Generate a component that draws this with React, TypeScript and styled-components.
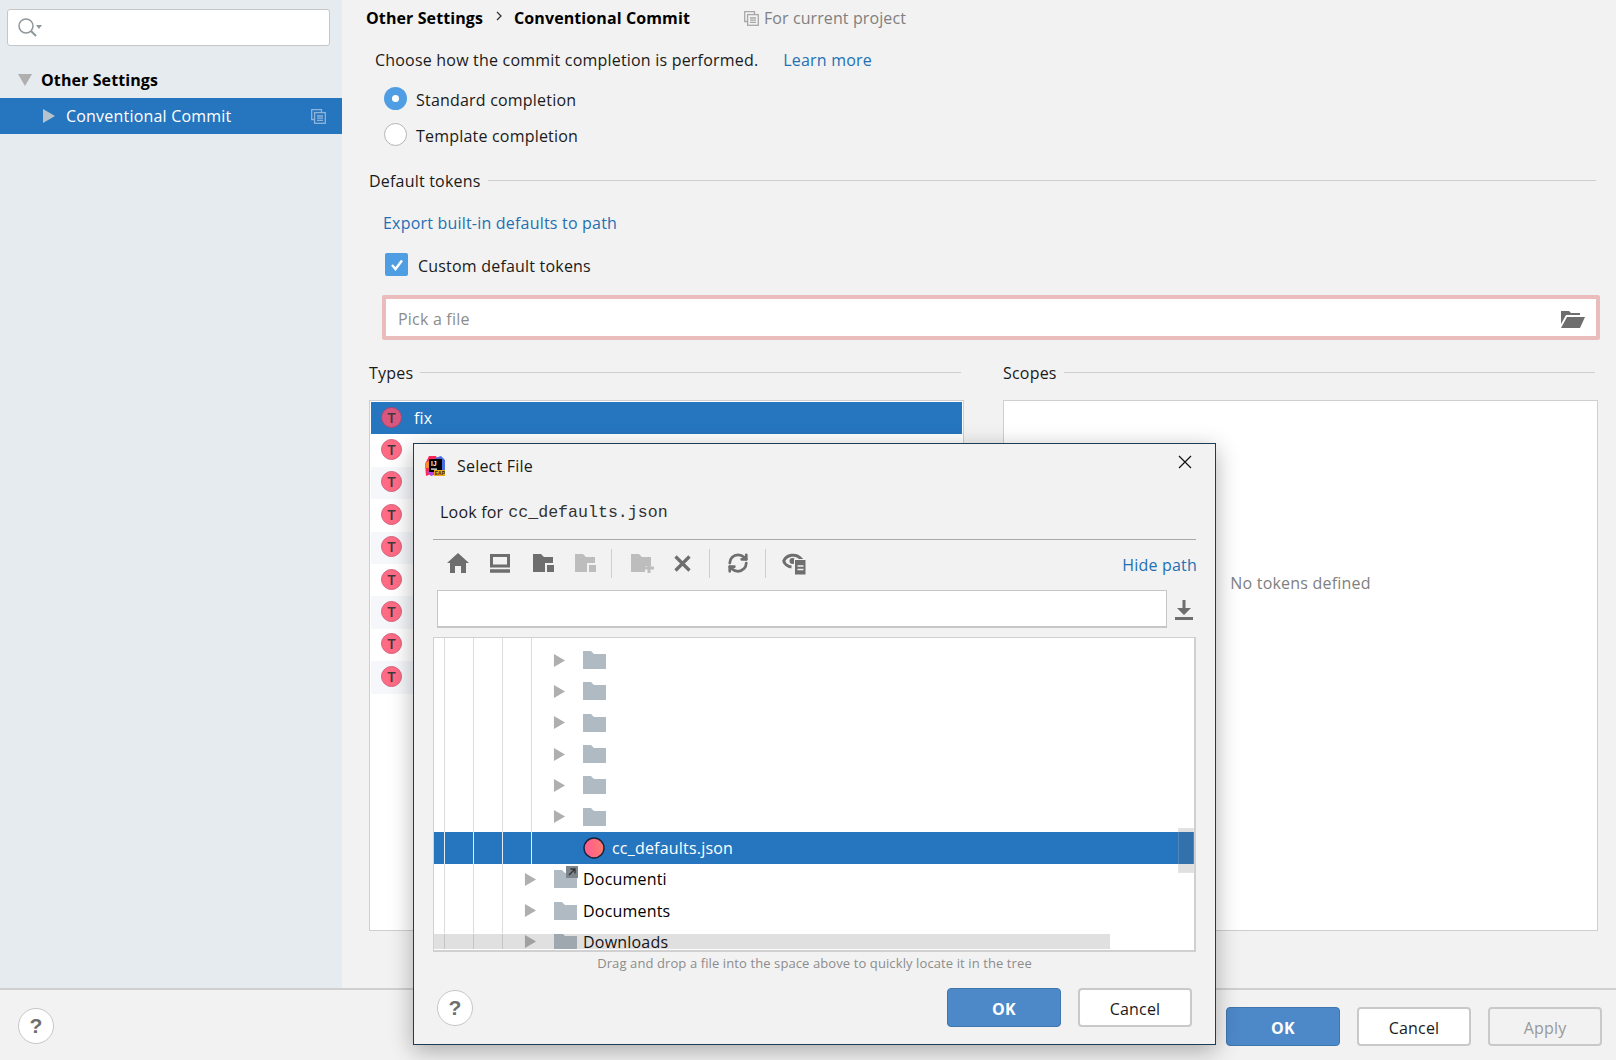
import React from 'react';
import styled, { createGlobalStyle } from 'styled-components';
import { RefreshCw } from 'lucide-react';

const GlobalStyle = createGlobalStyle`
  html, body {
    margin: 0;
    padding: 0;
    background: #f2f2f2;
  }
  body {
    font-family: "Open Sans", "Noto Sans", "Liberation Sans", sans-serif;
    font-size: 16px;
    letter-spacing: 0.2px;
    color: #1a1a1a;
  }
  * { box-sizing: border-box; }
`;

const BLUE = '#2675bf';
const LINK = '#2470b3';

const Page = styled.div`
  position: relative;
  width: 1616px;
  height: 1060px;
  overflow: hidden;
  display: flex;
  flex-direction: column;
`;

const Top = styled.div`
  height: 988px;
  display: flex;
`;

const Sidebar = styled.aside`
  flex: none;
  width: 342px;
  background: #e6ebf0;
  padding-top: 9px;
`;

const SearchBox = styled.div`
  width: 323px;
  height: 37px;
  margin-left: 7px;
  margin-bottom: 16px;
  padding-left: 9px;
  background: #fff;
  border: 1px solid #c6c6c6;
  border-radius: 3px;
  display: flex;
  align-items: center;
`;

const TreeHead = styled.div`
  height: 36px;
  padding-left: 18px;
  display: flex;
  align-items: center;
  gap: 9px;
  font-weight: 700;
  letter-spacing: 0.1px;
  color: #000;
`;

const TreeSelected = styled.div`
  height: 36px;
  padding: 0 16px 0 42px;
  display: flex;
  align-items: center;
  gap: 10px;
  background: ${BLUE};
  color: #fff;
`;

const Grow = styled.span`
  flex: 1;
`;

const Content = styled.main`
  flex: 1;
  min-width: 0;
  padding: 0 17px 0 27px;
`;

const Crumbs = styled.div`
  height: 36px;
  margin-left: -3px;
  display: flex;
  align-items: center;
  font-weight: 700;
  letter-spacing: 0.1px;
  color: #000;
`;

const CrumbArrow = styled.span`
  width: 31px;
  margin-top: -4px;
  display: flex;
  justify-content: center;
`;

const Scope = styled.span`
  margin-left: 54px;
  display: flex;
  align-items: center;
  gap: 5px;
  font-weight: 400;
  color: #808080;
`;

const Intro = styled.div`
  height: 24px;
  margin: 12px 0 15px 6px;
  display: flex;
  align-items: center;
  gap: 25px;
  color: #1a1a1a;
`;

const Link = styled.span`
  color: ${LINK};
`;

const OptionRow = styled.div`
  height: 23px;
  margin: 0 0 13px 15px;
  display: flex;
  align-items: center;
  gap: 9px;
`;

const OptionLabel = styled.span`
  margin-top: 2px;
`;

const Radio = styled.span<{ $on?: boolean }>`
  width: 23px;
  height: 23px;
  border-radius: 50%;
  display: flex;
  align-items: center;
  justify-content: center;
  background: ${p => (p.$on ? '#4f9ee3' : '#fff')};
  border: ${p => (p.$on ? 'none' : '1px solid #b5b5b5')};
  &::after {
    content: '';
    width: 7px;
    height: 7px;
    border-radius: 50%;
    background: ${p => (p.$on ? '#fff' : 'transparent')};
  }
`;

const SectionTitle = styled.div<{ $mt: number }>`
  height: 24px;
  margin-top: ${p => p.$mt}px;
  padding-right: 3px;
  display: flex;
  align-items: center;
  gap: 7px;
  &::after {
    content: '';
    flex: 1;
    height: 1px;
    margin-top: -2px;
    background: #cfcfcf;
  }
`;

const ExportRow = styled.div`
  height: 24px;
  margin: 18px 0 18px 14px;
  display: flex;
  align-items: center;
`;

const CheckRow = styled.div`
  height: 23px;
  margin-left: 16px;
  display: flex;
  align-items: center;
  gap: 10px;
`;

const CheckLabel = styled.span`
  margin-top: 2px;
`;

const CheckBox = styled.span`
  width: 23px;
  height: 23px;
  border-radius: 2px;
  background: #4f9ee3;
  display: flex;
  align-items: center;
  justify-content: center;
`;

const FileField = styled.div`
  height: 45px;
  margin: 19px -1px 21px 13px;
  padding: 2px 11px 0 12px;
  background: #fff;
  border: 4px solid #ebbcbc;
  border-radius: 2px;
  display: flex;
  align-items: center;
  justify-content: space-between;
  color: #8c8c8c;
`;

const Columns = styled.div`
  display: grid;
  grid-template-columns: 595px 595px;
  gap: 39px;
`;

const ListBox = styled.div`
  height: 531px;
  margin-top: 15px;
  padding: 1px;
  background: #fff;
  border: 1px solid #cfcfcf;
`;

const ListRow = styled.div<{ $selected?: boolean; $odd?: boolean }>`
  height: 32.4px;
  padding-left: 10px;
  display: flex;
  align-items: center;
  gap: 12px;
  color: #fff;
  background: ${p => (p.$selected ? BLUE : p.$odd ? '#f5f7fb' : '#fff')};
`;

const Badge = styled.span<{ $selected?: boolean }>`
  width: 21px;
  height: 21px;
  margin-top: -2px;
  border-radius: 50%;
  display: flex;
  align-items: center;
  justify-content: center;
  font-size: 15px;
  font-weight: 600;
  line-height: 1;
  color: #43393d;
  background: ${p => (p.$selected ? '#d9567f' : '#ff6b85')};
  border: 1px solid ${p => (p.$selected ? '#a9466f' : '#d4607a')};
`;

const EmptyBox = styled(ListBox)`
  padding-top: 171px;
  text-align: center;
  color: #808080;
`;

const Footer = styled.footer`
  height: 72px;
  padding: 17px 14px 0 18px;
  border-top: 2px solid #d0d0d0;
  display: flex;
  align-items: flex-start;
  gap: 17px;
`;

const Help = styled.span<{ $mt?: number }>`
  width: 36px;
  height: 36px;
  margin-top: ${p => p.$mt ?? 1}px;
  margin-right: auto;
  border-radius: 50%;
  background: #fff;
  border: 1px solid #c6c6c6;
  display: flex;
  align-items: center;
  justify-content: center;
  font-family: "Liberation Sans", sans-serif;
  font-size: 21px;
  font-weight: 700;
  color: #6e6e6e;
`;

const Button = styled.button<{ $kind?: 'primary' | 'disabled' }>`
  width: 114px;
  height: 39px;
  padding: 3px 0 0;
  border-radius: 4px;
  font: inherit;
  letter-spacing: inherit;
  font-weight: ${p => (p.$kind === 'primary' ? 700 : 400)};
  color: ${p => (p.$kind === 'primary' ? '#fff' : p.$kind === 'disabled' ? '#999' : '#1a1a1a')};
  background: ${p => (p.$kind === 'primary' ? '#4d88c9' : p.$kind === 'disabled' ? '#f2f2f2' : '#fff')};
  border: ${p => (p.$kind === 'primary' ? '1px solid #3f76ad' : '2px solid #c9c9c9')};
`;

/* floating file chooser */
const Dialog = styled.section`
  position: absolute;
  left: 413px;
  top: 443px;
  width: 803px;
  height: 602px;
  background: #f2f2f2;
  border: 1px solid #1c3d5a;
  box-shadow: 0 6px 22px rgba(0, 0, 0, 0.3);
`;

const TitleBar = styled.div`
  height: 44px;
  padding: 0 23px 0 11px;
  display: flex;
  align-items: center;
  gap: 12px;
`;

const Close = styled.span`
  margin: -8px 0 0 auto;
  display: flex;
`;

const LookFor = styled.div`
  height: 24px;
  margin: 12px 0 15px 26px;
  display: flex;
  align-items: center;
  gap: 5px;
`;

const Mono = styled.span`
  font-family: "Liberation Mono", monospace;
  font-size: 16.6px;
  letter-spacing: 0;
  color: #333;
`;

const Divider = styled.div`
  height: 1px;
  margin: 0 19px;
  background: #a8a8a8;
`;

const Toolbar = styled.div`
  height: 46px;
  padding: 0 18px 0 23px;
  display: flex;
  align-items: center;
`;

const ToolButton = styled.span<{ $nudge?: boolean }>`
  width: 42px;
  padding-left: ${p => (p.$nudge ? 4 : 0)}px;
  display: flex;
  justify-content: center;
`;

const ToolSep = styled.span`
  width: 1px;
  height: 29px;
  margin: 0 7px 0 6px;
  background: #cfcfcf;
`;

const HidePath = styled(Link)`
  margin: 4px 0 0 auto;
`;

const PathRow = styled.div`
  height: 38px;
  margin: 4px 0 9px 23px;
  display: flex;
  align-items: center;
`;

const PathInput = styled.div`
  width: 730px;
  height: 38px;
  background: #fff;
  border: 1px solid #c6c6c6;
  border-bottom-width: 2px;
`;

const PathAction = styled.span`
  margin: 2px 0 0 7px;
  display: flex;
`;

const Tree = styled.div`
  position: relative;
  height: 315px;
  margin: 0 19px;
  overflow: hidden;
  background: #fff;
  border: 1px solid #d0d0d0;
  border-bottom-width: 2px;
  border-right-width: 2px;
`;

const TreeRow = styled.div<{ $h?: number; $selected?: boolean }>`
  height: ${p => p.$h ?? 31.3}px;
  display: flex;
  align-items: center;
  color: ${p => (p.$selected ? '#fff' : '#000')};
  background: ${p => (p.$selected ? BLUE : 'transparent')};
`;

const Guides = styled.span<{ $selected?: boolean }>`
  align-self: stretch;
  flex: none;
  display: flex;
  margin-left: 10px;
  span {
    width: 29px;
    border-left: 1px solid ${p => (p.$selected ? '#e4eef8' : '#dcdcdc')};
  }
`;

const Expander = styled.span`
  width: 30px;
  margin-left: -7px;
  flex: none;
  display: flex;
  align-items: center;
`;

const RowIcon = styled.span`
  position: relative;
  width: 29px;
  flex: none;
  display: flex;
  align-items: center;
`;

const LinkMark = styled.span`
  position: absolute;
  right: 5px;
  top: -4px;
  display: flex;
`;

const HScroll = styled.div`
  position: absolute;
  left: 0;
  bottom: 0;
  width: 677px;
  height: 17px;
  background: rgba(100, 100, 100, 0.2);
  border: 1px solid #fff;
  border-left: none;
`;

const VScroll = styled.div`
  position: absolute;
  right: 0;
  top: 190px;
  width: 16px;
  height: 45px;
  background: rgba(100, 100, 100, 0.2);
  border: 1px solid rgba(255, 255, 255, 0.15);
`;

const Hint = styled.div`
  height: 22px;
  display: flex;
  align-items: center;
  justify-content: center;
  font-size: 13px;
  letter-spacing: 0.1px;
  color: #8c8c8c;
`;

const DialogFooter = styled.div`
  margin-top: 14px;
  padding: 0 23px;
  display: flex;
  align-items: flex-start;
  gap: 17px;
`;

/* icons */
const SearchIcon = () => (
  <svg width="26" height="22" viewBox="0 0 26 22" fill="none">
    <circle cx="9" cy="9" r="7" stroke="#8e979c" strokeWidth="1.5" />
    <path d="M14 14l5 5" stroke="#8e979c" strokeWidth="2" />
    <path d="M19 8h6l-3 4z" fill="#8e979c" />
  </svg>
);

const Triangle = ({ dir, color = '#afafaf', size = 14 }: { dir: 'right' | 'down'; color?: string; size?: number }) => (
  <svg width={size} height={size} viewBox="0 0 14 14">
    <path d={dir === 'right' ? 'M1 0l12 7-12 7z' : 'M0 1h14l-7 12z'} fill={color} />
  </svg>
);

const CopyIcon = ({ color }: { color: string }) => (
  <svg width="15" height="15" viewBox="0 0 15 15" fill="none" stroke={color} strokeWidth="1.3">
    <path d="M3 10.5H.7V.7h9.8V3" />
    <rect x="3.6" y="3.6" width="10.7" height="10.7" />
    <path d="M6 7h6M6 9.2h6M6 11.4h6" />
  </svg>
);

const OpenFolder = () => (
  <svg width="24" height="19" viewBox="0 0 24 19" fill="#6e6e6e">
    <path d="M0 2h8l2 2h9v2H5L0 15z" />
    <path d="M6 8h18l-5 11H0z" />
  </svg>
);

const FolderDoc = ({ color }: { color: string }) => (
  <svg width="22" height="20" viewBox="0 0 22 20">
    <path d="M0 1h8l3 3h9v15H0z" fill={color} />
    <rect x="12" y="10" width="10" height="10" fill="#f2f2f2" />
    <rect x="14" y="12" width="7" height="7" fill={color} />
  </svg>
);

const Logo = () => (
  <svg width="20" height="20" viewBox="0 0 20 20">
    <path d="M0 8l4-8h7l3 6-8 12-5 2z" fill="#fe2857" />
    <path d="M0 7l4-2v7H1z" fill="#ff8a26" />
    <path d="M10 2l6-2 4 4v10H10z" fill="#4a6ee0" />
    <path d="M2 16l4 4 6-2-4-6z" fill="#b345d8" />
    <rect x="4" y="3" width="13" height="13" fill="#000" />
    <rect x="6" y="12.5" width="6" height="1.2" fill="#fff" />
    <text x="6" y="10" fontSize="6.5" fontWeight="700" fill="#fff" fontFamily="Liberation Sans, sans-serif">IJ</text>
    <rect x="9" y="14" width="11" height="6" fill="#f0a81c" />
    <text x="9.7" y="19" fontSize="4.8" fontWeight="700" fill="#222" fontFamily="Liberation Sans, sans-serif">EAP</text>
  </svg>
);

const ToolIcons: Record<string, React.ReactNode> = {
  home: (
    <svg width="22" height="20" viewBox="0 0 22 20" fill="#6e6e6e">
      <path d="M11 0l11 10h-3v10h-5v-7H8v7H3V10H0z" />
    </svg>
  ),
  monitor: (
    <svg width="20" height="19" viewBox="0 0 20 19" fill="none" stroke="#6e6e6e">
      <rect x="1.5" y="1.5" width="17" height="10.5" strokeWidth="3" />
      <path d="M0 17h20" strokeWidth="3.5" />
    </svg>
  ),
  folderPlus: (
    <svg width="23" height="20" viewBox="0 0 23 20">
      <path d="M0 1h8l3 3h9v9h-6v6H0z" fill="#bdbdbd" />
      <path d="M18 10v10M13 15h10" stroke="#bdbdbd" strokeWidth="3" />
    </svg>
  ),
  close: (
    <svg width="17" height="17" viewBox="0 0 17 17" stroke="#6e6e6e" strokeWidth="3.2">
      <path d="M1.5 1.5l14 14M15.5 1.5l-14 14" />
    </svg>
  ),
  eye: (
    <svg width="24" height="23" viewBox="0 0 24 23" fill="none">
      <path d="M1.5 9.5C4 3 14 0 20 8" stroke="#6e6e6e" strokeWidth="3" />
      <path d="M1.5 9c1.5 3.5 4 5.5 8 6" stroke="#6e6e6e" strokeWidth="3" />
      <circle cx="10.5" cy="9" r="3" fill="#6e6e6e" />
      <rect x="12.5" y="7.5" width="11.5" height="15.5" fill="#6e6e6e" stroke="#f2f2f2" />
      <path d="M15.5 14h6M15.5 17.5h6" stroke="#f2f2f2" strokeWidth="1.5" />
    </svg>
  ),
};

const Download = () => (
  <svg width="20" height="20" viewBox="0 0 20 20" fill="#6e6e6e">
    <path d="M8.5 0h3v8H17l-7 7-7-7h5.5z" />
    <rect x="1" y="17" width="18" height="3" />
  </svg>
);

const Folder = ({ color = '#afbac2' }: { color?: string }) => (
  <svg width="23" height="18" viewBox="0 0 23 18">
    <path d="M0 0h8l3 3h12v15H0z" fill={color} />
  </svg>
);

const ShortcutMark = () => (
  <svg width="12" height="12" viewBox="0 0 12 12" fill="none">
    <rect width="12" height="12" fill="#7c868c" />
    <path d="M3 9l6-6M4.5 3H9v4.5" stroke="#333" strokeWidth="1.3" />
  </svg>
);

const FileDot = () => (
  <svg width="22" height="22" viewBox="0 0 22 22">
    <defs>
      <linearGradient id="fileDot">
        <stop offset="0" stopColor="#ff5a94" />
        <stop offset="1" stopColor="#ff7b6b" />
      </linearGradient>
    </defs>
    <circle cx="11" cy="11" r="10" fill="url(#fileDot)" stroke="#15233a" strokeWidth="1.4" />
  </svg>
);

const GuideLines = ({ depth, selected }: { depth: number; selected?: boolean }) => (
  <Guides $selected={selected}>
    {Array.from({ length: depth }, (_, i) => <span key={i} />)}
  </Guides>
);

const DEEP_FOLDERS = [0, 1, 2, 3, 4, 5];
const SHALLOW_FOLDERS = ['Documenti', 'Documents', 'Downloads'];
const TOKEN_ROWS = [0, 1, 2, 3, 4, 5, 6, 7, 8];

const FileDialog = () => (
  <Dialog>
    <TitleBar>
      <Logo />
      <span>Select File</span>
      <Close>
        <svg width="14" height="14" viewBox="0 0 14 14" stroke="#111" strokeWidth="1.2">
          <path d="M1 1l12 12M13 1L1 13" />
        </svg>
      </Close>
    </TitleBar>
    <LookFor>
      Look for <Mono>cc_defaults.json</Mono>
    </LookFor>
    <Divider />
    <Toolbar>
      <ToolButton>{ToolIcons.home}</ToolButton>
      <ToolButton>{ToolIcons.monitor}</ToolButton>
      <ToolButton $nudge><FolderDoc color="#6e6e6e" /></ToolButton>
      <ToolButton $nudge><FolderDoc color="#bdbdbd" /></ToolButton>
      <ToolSep />
      <ToolButton $nudge>{ToolIcons.folderPlus}</ToolButton>
      <ToolButton>{ToolIcons.close}</ToolButton>
      <ToolSep />
      <ToolButton><RefreshCw size={22} color="#6e6e6e" strokeWidth={3} /></ToolButton>
      <ToolSep />
      <ToolButton>{ToolIcons.eye}</ToolButton>
      <HidePath>Hide path</HidePath>
    </Toolbar>
    <PathRow>
      <PathInput />
      <PathAction><Download /></PathAction>
    </PathRow>
    <Tree>
      <TreeRow $h={6.5}>
        <GuideLines depth={4} />
      </TreeRow>
      {DEEP_FOLDERS.map(i => (
        <TreeRow key={i}>
          <GuideLines depth={4} />
          <Expander><Triangle dir="right" size={13} /></Expander>
          <RowIcon><Folder /></RowIcon>
        </TreeRow>
      ))}
      <TreeRow $selected>
        <GuideLines depth={4} selected />
        <Expander />
        <RowIcon><FileDot /></RowIcon>
        cc_defaults.json
      </TreeRow>
      {SHALLOW_FOLDERS.map((name, i) => (
        <TreeRow key={name}>
          <GuideLines depth={3} />
          <Expander><Triangle dir="right" size={13} /></Expander>
          <RowIcon>
            <Folder />
            {i === 0 && <LinkMark><ShortcutMark /></LinkMark>}
          </RowIcon>
          {name}
        </TreeRow>
      ))}
      <HScroll />
      <VScroll />
    </Tree>
    <Hint>Drag and drop a file into the space above to quickly locate it in the tree</Hint>
    <DialogFooter>
      <Help $mt={2}>?</Help>
      <Button $kind="primary">OK</Button>
      <Button>Cancel</Button>
    </DialogFooter>
  </Dialog>
);

const App = () => (
  <Page>
    <GlobalStyle />
    <Top>
      <Sidebar>
        <SearchBox><SearchIcon /></SearchBox>
        <TreeHead>
          <Triangle dir="down" />
          Other Settings
        </TreeHead>
        <TreeSelected>
          <Triangle dir="right" color="#b6c3cf" />
          Conventional Commit
          <Grow />
          <CopyIcon color="#8fb4d8" />
        </TreeSelected>
      </Sidebar>
      <Content>
        <Crumbs>
          Other Settings
          <CrumbArrow>
            <svg width="6" height="10" viewBox="0 0 6 10" fill="none" stroke="#333" strokeWidth="1.3">
              <path d="M1 1l4 4-4 4" />
            </svg>
          </CrumbArrow>
          Conventional Commit
          <Scope>
            <CopyIcon color="#a8a8a8" />
            For current project
          </Scope>
        </Crumbs>
        <Intro>
          Choose how the commit completion is performed.
          <Link>Learn more</Link>
        </Intro>
        <OptionRow>
          <Radio $on />
          <OptionLabel>Standard completion</OptionLabel>
        </OptionRow>
        <OptionRow>
          <Radio />
          <OptionLabel>Template completion</OptionLabel>
        </OptionRow>
        <SectionTitle $mt={23}>Default tokens</SectionTitle>
        <ExportRow><Link>Export built-in defaults to path</Link></ExportRow>
        <CheckRow>
          <CheckBox>
            <svg width="14" height="12" viewBox="0 0 14 12" fill="none" stroke="#fff" strokeWidth="2.4">
              <path d="M2 6l3.5 4L12 1.5" />
            </svg>
          </CheckBox>
          <CheckLabel>Custom default tokens</CheckLabel>
        </CheckRow>
        <FileField>
          Pick a file
          <OpenFolder />
        </FileField>
        <Columns>
          <div>
            <SectionTitle $mt={0}>Types</SectionTitle>
            <ListBox>
              {TOKEN_ROWS.map(i => (
                <ListRow key={i} $selected={i === 0} $odd={i % 2 === 0}>
                  <Badge $selected={i === 0}>T</Badge>
                  {i === 0 && 'fix'}
                </ListRow>
              ))}
            </ListBox>
          </div>
          <div>
            <SectionTitle $mt={0}>Scopes</SectionTitle>
            <EmptyBox>No tokens defined</EmptyBox>
          </div>
        </Columns>
      </Content>
    </Top>
    <Footer>
      <Help>?</Help>
      <Button $kind="primary">OK</Button>
      <Button>Cancel</Button>
      <Button $kind="disabled">Apply</Button>
    </Footer>
    <FileDialog />
  </Page>
);

export default App;
